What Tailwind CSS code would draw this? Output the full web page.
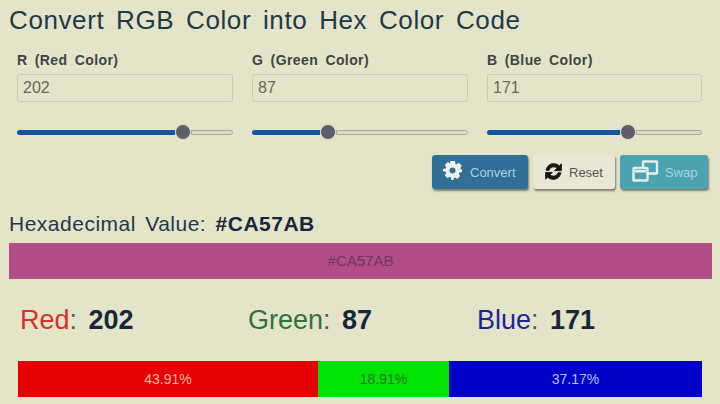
<!DOCTYPE html>
<html lang="en">
<head>
    <meta charset="UTF-8">
    <title>Convert RGB Color into Hex Color Code</title>
    <script src="https://cdn.jsdelivr.net/npm/@tailwindcss/browser@4"></script>
</head>
<body class="bg-[#e4e4c9] font-['Liberation_Sans',Arial,sans-serif] w-[720px] h-[404px] overflow-hidden">

    <div class="pl-[9px] pr-[8px] pt-[6px]">
        <h1 class="text-[26px] leading-[29px] text-[#1c3a4a] tracking-[0.6px] [word-spacing:4px]">Convert RGB Color into Hex Color Code</h1>

        <!-- inputs and sliders -->
        <div class="pl-[8px] mt-[17px] grid grid-cols-[216px_216px_215px] gap-x-[19px]">
            <div>
                <label class="block text-[14px] leading-[16px] font-bold text-[#3a4548] tracking-[0.4px] [word-spacing:3px]">R (Red Color)</label>
                <div class="mt-[6px] h-[28px] border border-[#ccccb4] rounded-[3px] px-[5px] text-[16px] leading-[26px] text-[#66665c]">202</div>
                <div class="mt-[22px] h-[16px] flex items-center">
                    <div class="w-[158px] h-[5px] rounded-l-full bg-[#1556a4]"></div>
                    <div class="w-[16px] h-[16px] shrink-0 rounded-full bg-[#5e5e68] border border-[#d8d8c4]"></div>
                    <div class="flex-1 h-[5px] rounded-r-full bg-[#dcdcc8] border border-[#aaa99a]"></div>
                </div>
            </div>
            <div>
                <label class="block text-[14px] leading-[16px] font-bold text-[#3a4548] tracking-[0.4px] [word-spacing:3px]">G (Green Color)</label>
                <div class="mt-[6px] h-[28px] border border-[#ccccb4] rounded-[3px] px-[5px] text-[16px] leading-[26px] text-[#66665c]">87</div>
                <div class="mt-[22px] h-[16px] flex items-center">
                    <div class="w-[68px] h-[5px] rounded-l-full bg-[#1556a4]"></div>
                    <div class="w-[16px] h-[16px] shrink-0 rounded-full bg-[#5e5e68] border border-[#d8d8c4]"></div>
                    <div class="flex-1 h-[5px] rounded-r-full bg-[#dcdcc8] border border-[#aaa99a]"></div>
                </div>
            </div>
            <div>
                <label class="block text-[14px] leading-[16px] font-bold text-[#3a4548] tracking-[0.4px] [word-spacing:3px]">B (Blue Color)</label>
                <div class="mt-[6px] h-[28px] border border-[#ccccb4] rounded-[3px] px-[5px] text-[16px] leading-[26px] text-[#66665c]">171</div>
                <div class="mt-[22px] h-[16px] flex items-center">
                    <div class="w-[133px] h-[5px] rounded-l-full bg-[#1556a4]"></div>
                    <div class="w-[16px] h-[16px] shrink-0 rounded-full bg-[#5e5e68] border border-[#d8d8c4]"></div>
                    <div class="flex-1 h-[5px] rounded-r-full bg-[#dcdcc8] border border-[#aaa99a]"></div>
                </div>
            </div>
        </div>

        <!-- buttons -->
        <div class="mt-[15px] flex justify-end gap-[5px] pr-[4px]">
            <button class="w-[96px] h-[34px] flex items-center gap-[8px] pl-[11px] rounded-[3px] bg-[#2f6f98] text-[#b4cede] text-[13px] shadow-[1px_2px_2px_rgba(60,60,40,0.6)]">
                <svg class="w-[19px] h-[19px] -mt-[4px]" viewBox="0 0 24 24" fill="#eef2ee"><path fill-rule="evenodd" d="M9 0h6l.6 3.4 1.6.7L20 2.2 23.8 6l-1.9 2.8.7 1.6L24 11v3l-3.4.6-.7 1.6 1.9 2.8-3.8 3.8-2.8-1.9-1.6.7L13.5 24h-3l-.6-3.4-1.6-.7-2.8 1.9L2.2 18l1.9-2.8-.7-1.6L0 13v-3l3.4-.6.7-1.6L2.2 5 6 1.2l2.8 1.9.2-.1zM12 8.2a3.8 3.8 0 1 0 0 7.6 3.8 3.8 0 0 0 0-7.6z"/></svg>
                <span class="mt-[2px]">Convert</span>
            </button>
            <button class="w-[82px] h-[34px] flex items-center gap-[5px] pl-[10px] rounded-[3px] bg-[#e9e7d6] text-[#55554e] text-[13px] shadow-[1px_2px_2px_rgba(60,60,40,0.6)]">
                <svg class="w-[21px] h-[21px] -mt-[1px]" viewBox="0 0 24 24" fill="#141414" stroke="#141414" stroke-width="1"><path d="M3.5 10.5C4.4 5.8 8 3 12.2 3c2.6 0 4.8 1 6.4 2.6L21 3.2V11h-7.8l2.7-2.7c-1-1-2.3-1.6-3.8-1.6-2.5 0-4.6 1.6-5.2 3.8zM20.5 13.5C19.6 18.2 16 21 11.8 21c-2.6 0-4.8-1-6.4-2.6L3 20.8V13h7.8l-2.7 2.7c1 1 2.3 1.6 3.8 1.6 2.5 0 4.6-1.6 5.2-3.8z"/></svg>
                <span class="mt-[2px]">Reset</span>
            </button>
            <button class="w-[88px] h-[34px] flex items-center gap-[6px] pl-[12px] rounded-[3px] bg-[#4ba3b2] text-[#a9d4d8] text-[13px] shadow-[1px_2px_2px_rgba(60,60,40,0.6)]">
                <svg class="w-[27px] h-[22px] -mt-[2px]" viewBox="0 0 27 22" fill="none" stroke="#e4eeea" stroke-width="2.4"><rect x="11" y="1.5" width="14" height="12" rx="0.5"/><rect x="1.5" y="8" width="14" height="12.5" rx="0.5" fill="#4ba3b2"/><rect x="3" y="10" width="11" height="2.5" fill="#e4eeea" stroke="none"/></svg>
                <span class="mt-[2px]">Swap</span>
            </button>
        </div>

        <!-- hex value -->
        <div class="mt-[23px] text-[21px] leading-[24px] text-[#1c3a4a] tracking-[0.5px] [word-spacing:3px]">Hexadecimal Value: <b class="text-[#14283c]">#CA57AB</b></div>
        <div class="mt-[7px] h-[36px] bg-[#b34d87] flex items-center justify-center text-[15px] text-[#6d3a60]">#CA57AB</div>

        <!-- channel values -->
        <div class="pl-[11px] mt-[26px] grid grid-cols-[228px_229px_1fr] text-[27px] leading-[30px]">
            <div class="text-[#d8322c]">Red<span class="text-[#4b5a5a]">:</span> <b class="ml-[4px] text-[#14283c]">202</b></div>
            <div class="text-[#34703f]">Green<span class="text-[#4b5a5a]">:</span> <b class="ml-[4px] text-[#14283c]">87</b></div>
            <div class="text-[#1c249c]">Blue<span class="text-[#4b5a5a]">:</span> <b class="ml-[4px] text-[#14283c]">171</b></div>
        </div>

        <!-- percentages -->
        <div class="ml-[9px] mr-[10px] mt-[26px] h-[36px] flex text-[14px] leading-[36px] text-center">
            <div class="w-[300px] bg-[#e60000] text-[#f2b8a8]">43.91%</div>
            <div class="w-[131px] bg-[#00e300] text-[#2d7a2d]">18.91%</div>
            <div class="flex-1 bg-[#0000c8] text-[#b4c0f0]">37.17%</div>
        </div>
    </div>

</body>
</html>
